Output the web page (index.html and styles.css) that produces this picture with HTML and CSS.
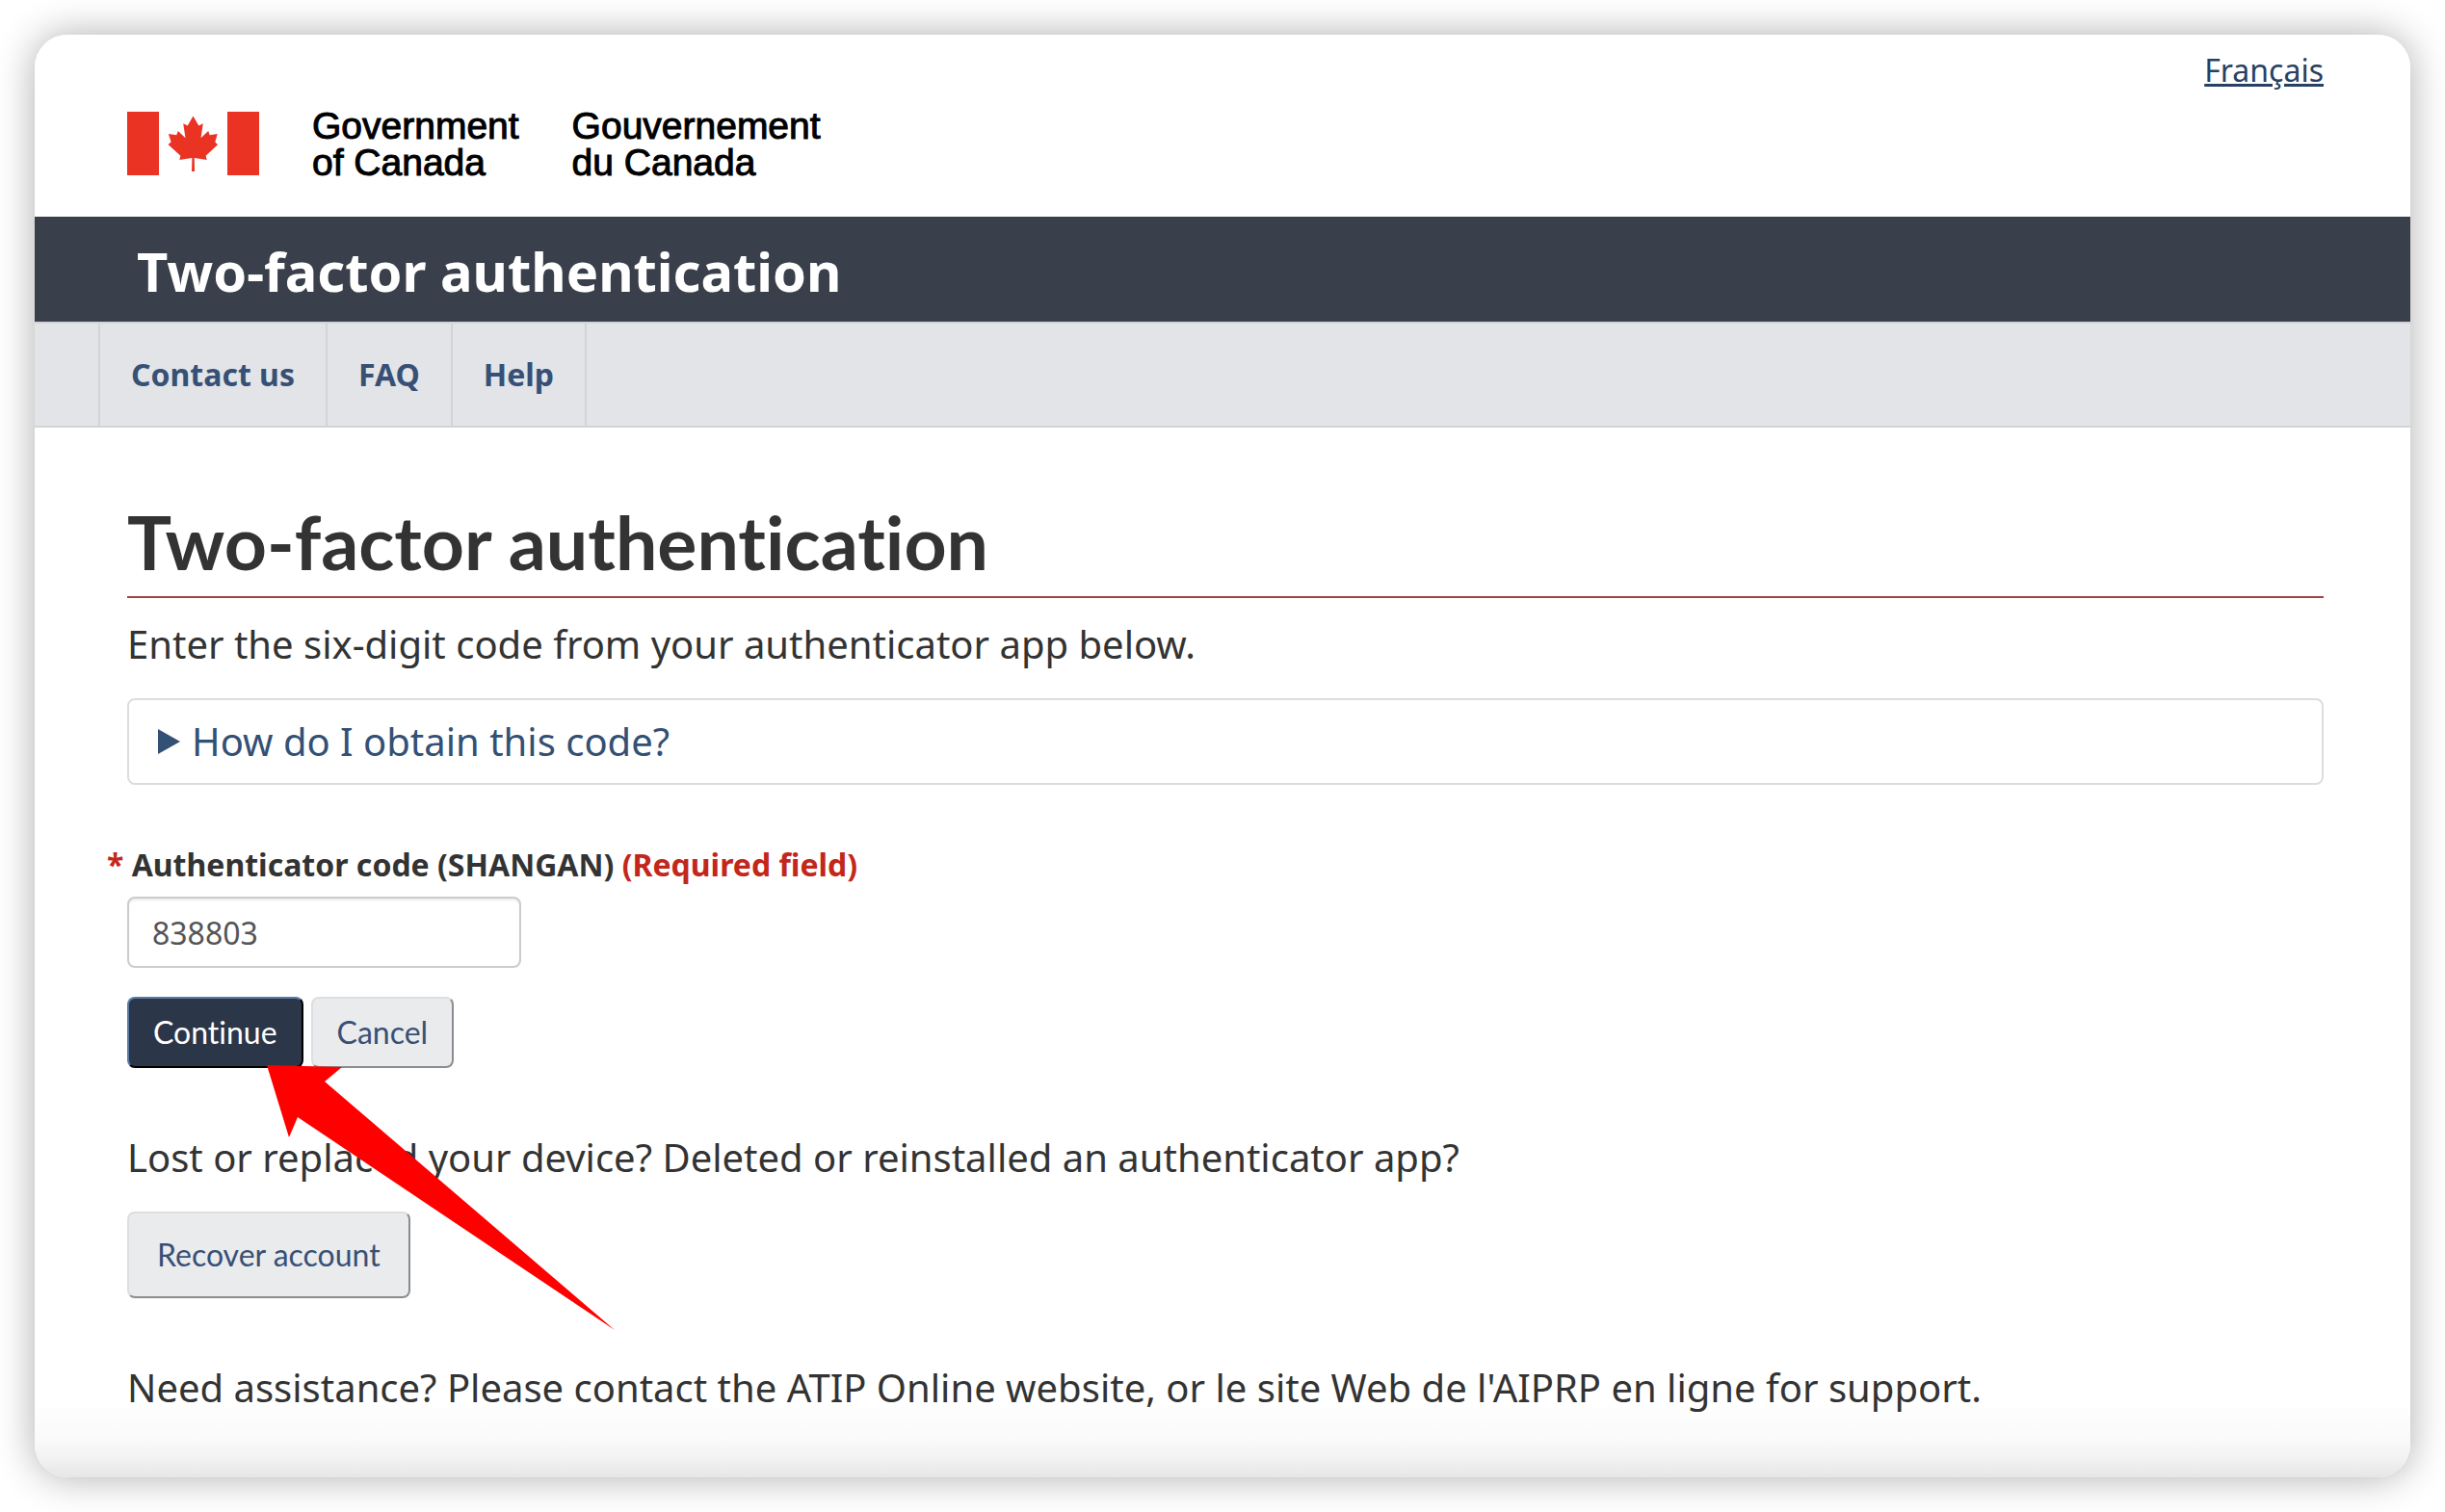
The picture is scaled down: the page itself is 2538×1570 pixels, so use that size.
FILE: index.html
```html
<!DOCTYPE html>
<html lang="en">
<head>
<meta charset="utf-8">
<meta name="viewport" content="width=device-width, initial-scale=1">
<title>Two-factor authentication</title>
<link rel="stylesheet" href="styles.css">
</head>
<body>
<div class="window">
  <header class="header">
    <a class="lang" href="#" lang="fr">Français</a>
    <div class="brand">
      <svg class="flag" viewBox="0 0 137 66" aria-hidden="true">
        <path d="M0 0h33v66H0zM104 0h33v66h-33z"/>
        <path d="M68.500 4.500L74.300 14.500L78.800 12.200L76.500 27.200L84.200 20L85.700 24.300L93.700 23L91.300 31.500L94 34.300L81.600 45.800L82.700 50L69.800 48L70 62H67L67.400 48L54.300 50L55.400 45.800L42.500 34L45.600 31.500L42.900 23L51.200 24.300L52.800 20L60.500 27.200L58.200 12.200L62.700 14.500Z"/>
      </svg>
      <span class="brand-name">Government<br>of Canada</span>
      <span class="brand-name brand-fr" lang="fr">Gouvernement<br>du Canada</span>
    </div>
  </header>
  <div class="app-bar">Two-factor authentication</div>
  <nav class="menu" aria-label="Site">
    <a href="#">Contact us</a>
    <a href="#">FAQ</a>
    <a href="#">Help</a>
  </nav>
  <main class="content">
    <h1>Two-factor authentication</h1>
    <p class="intro">Enter the six-digit code from your authenticator app below.</p>
    <details>
      <summary>How do I obtain this code?</summary>
    </details>
    <form class="code-form">
      <label for="code"><span class="required">*</span> Authenticator code (SHANGAN) <span class="required">(Required field)</span></label>
      <input id="code" type="text" value="838803" required>
      <div class="actions">
        <button class="btn btn-primary" type="button">Continue</button>
        <button class="btn" type="button">Cancel</button>
        <svg class="pointer" viewBox="0 0 361 275" aria-hidden="true"><path d="M0 0L78 2L60 17L361 275L32 54L23 75Z"/></svg>
      </div>
    </form>
    <p class="lost">Lost or replaced your device? Deleted or reinstalled an authenticator app?</p>
    <button class="btn btn-large" type="button">Recover account</button>
    <p class="help">Need assistance? Please contact the ATIP Online website, or le site Web de l'AIPRP en ligne for support.</p>
  </main>
</div>
</body>
</html>
```

FILE: styles.css
```css
* {
  box-sizing: border-box;
}

body {
  margin: 0;
  padding: 36px;
  background: #fff;
  color: #333;
  font: 40px/60px "Noto Sans", sans-serif;
}

.window {
  overflow: hidden;
  border-radius: 34px;
  background: linear-gradient(to top, #e6e6e6, #f1f1f1 18px, #fafafa 40px, #fff 80px);
  box-shadow: 0 0 40px rgba(0, 0, 0, 0.32);
}

.header {
  display: flex;
  flex-direction: column;
  padding: 15px 90px 37px 96px;
}

.lang {
  align-self: flex-end;
  margin-bottom: 17px;
  color: #284162;
  font-size: 32px;
  line-height: 44px;
}

.brand {
  display: flex;
  align-items: center;
}

.flag {
  width: 137px;
  height: 66px;
  margin: 0 55px 2px 0;
  fill: #eb3323;
}

.brand-name {
  color: #000;
  font: 39px/38px "Liberation Sans", sans-serif;
  -webkit-text-stroke: 1px #000;
}

.brand-fr {
  margin-left: 55px;
}

.app-bar {
  padding: 18px 106px 15px;
  background: #3a404b;
  color: #fff;
  font-size: 56px;
  font-weight: 700;
  line-height: 76px;
}

.menu {
  display: flex;
  padding-left: 66px;
  border: solid #d3d4d8;
  border-width: 2px 0;
  background: #e2e4e8;
}

.menu a {
  padding: 0 32px;
  border-right: 2px solid #d3d4d8;
  color: #385075;
  font-size: 32px;
  font-weight: 700;
  line-height: 106px;
  text-decoration: none;
}

.menu a:first-child {
  border-left: 2px solid #d3d4d8;
}

.content {
  padding: 76px 90px 63px 96px;
}

h1 {
  margin: 0;
  padding-bottom: 15px;
  border-bottom: 2px solid #a04446;
  font: 700 77px/84px Lato, sans-serif;
  font-variant-ligatures: none;
}

.intro {
  margin: 18px 0 26px;
}

details {
  border: 2px solid #ddd;
  border-radius: 8px;
}

summary {
  display: flex;
  align-items: center;
  gap: 12px;
  padding: 13px 30px;
  color: #335075;
  list-style: none;
}

summary::before {
  width: 23px;
  height: 26px;
  background: currentColor;
  clip-path: polygon(0 0, 100% 50%, 0 100%);
  content: "";
}

.code-form {
  margin-top: 59px;
}

label {
  display: block;
  margin: 0 0 9px -21px;
  font-size: 32px;
  font-weight: 700;
  line-height: 48px;
}

.required {
  color: #c3271b;
}

input {
  display: block;
  width: 409px;
  height: 74px;
  padding: 0 24px;
  border: 2px solid #ccc;
  border-radius: 8px;
  box-shadow: inset 0 2px 2px rgba(0, 0, 0, 0.08);
  color: #555;
  font: 32px/44px "Noto Sans", sans-serif;
}

.actions {
  position: relative;
  display: flex;
  gap: 8px;
  margin-top: 30px;
}

.btn {
  padding: 13px 25px;
  border: 2px solid;
  border-color: #dcdee1 #8a8c8f #8a8c8f #dcdee1;
  border-radius: 8px;
  background: #eaebed;
  color: #385075;
  font: 32px/44px Lato, sans-serif;
  font-variant-ligatures: none;
}

.btn-primary {
  border-color: #587ba8 #000 #000 #587ba8;
  background: #2b3748;
  color: #fff;
}

.btn-large {
  display: block;
  padding: 21px 29px;
}

.pointer {
  position: absolute;
  top: 71px;
  left: 145px;
  width: 361px;
  height: 275px;
  fill: #f00;
}

.lost {
  margin: 63px 0 26px;
}

.help {
  margin: 63px 0 0;
}
```
